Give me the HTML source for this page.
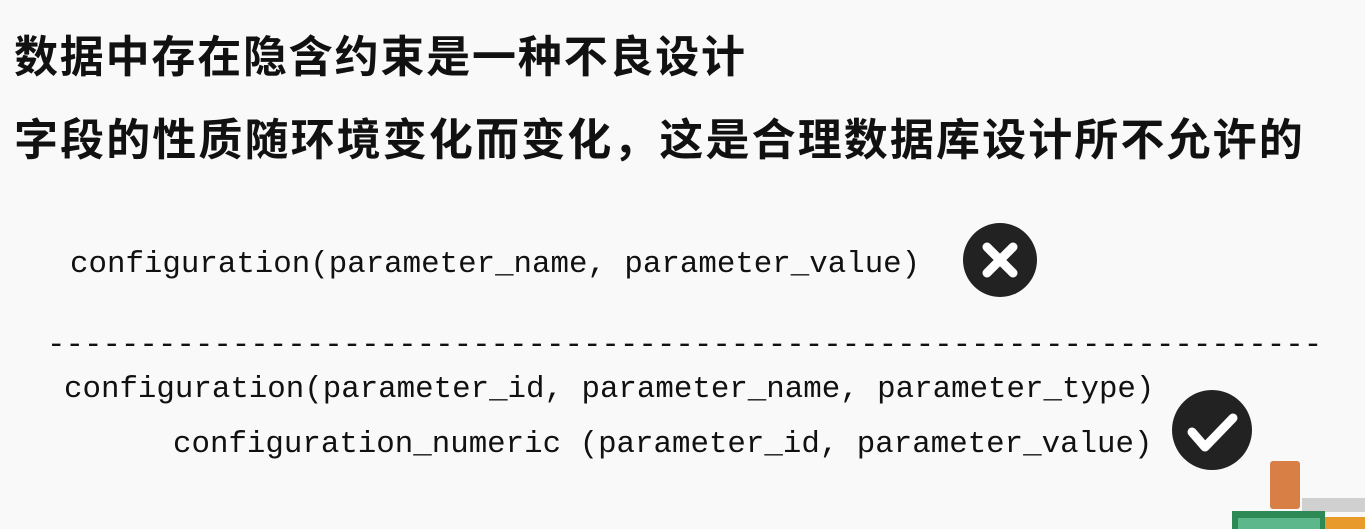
<!DOCTYPE html>
<html><head><meta charset="utf-8"><style>
body{margin:0;width:1365px;height:529px;background:#f9f9f9;position:relative;overflow:hidden}
.h{position:absolute;left:14px;font-family:"Liberation Sans","Noto Sans CJK SC",sans-serif;font-weight:bold;color:#111;white-space:nowrap}
.m{position:absolute;font-family:"Liberation Mono",monospace;font-size:30.8px;color:#111;white-space:nowrap;line-height:1}
</style></head><body>
<div class="h" style="top:21px;font-size:44px;letter-spacing:1.8px">数据中存在隐含约束是一种不良设计</div>
<div class="h" style="top:104px;font-size:44px;letter-spacing:2.1px">字段的性质随环境变化而变化，这是合理数据库设计所不允许的</div>
<div class="m" style="left:70px;top:250px">configuration(parameter_name, parameter_value)</div>
<div class="m" style="left:47px;top:331px">---------------------------------------------------------------------</div>
<div class="m" style="left:64px;top:375px">configuration(parameter_id, parameter_name, parameter_type)</div>
<div class="m" style="left:173px;top:430px">configuration_numeric (parameter_id, parameter_value)</div>
<svg style="position:absolute;left:0;top:0" width="1365" height="529">
<circle cx="1000" cy="260" r="37" fill="#222"/>
<path d="M987 247 L1013 273 M1013 247 L987 273" stroke="#fff" stroke-width="9" stroke-linecap="round"/>
<circle cx="1212" cy="430" r="40" fill="#222"/>
<path d="M1192 432 L1205 447 L1233 418" stroke="#fff" stroke-width="9" stroke-linecap="round" stroke-linejoin="round" fill="none"/>
<rect x="1270" y="461" width="30" height="48" rx="3" fill="#d77f45"/>
<rect x="1302" y="498" width="63" height="14" fill="#d0d0d0"/>
<rect x="1325" y="517" width="40" height="12" fill="#e89a2a"/>
<rect x="1232" y="511" width="93" height="18" fill="#2e8a55"/>
<rect x="1238" y="518" width="82" height="11" fill="#5cb88a"/>
</svg>
</body></html>
